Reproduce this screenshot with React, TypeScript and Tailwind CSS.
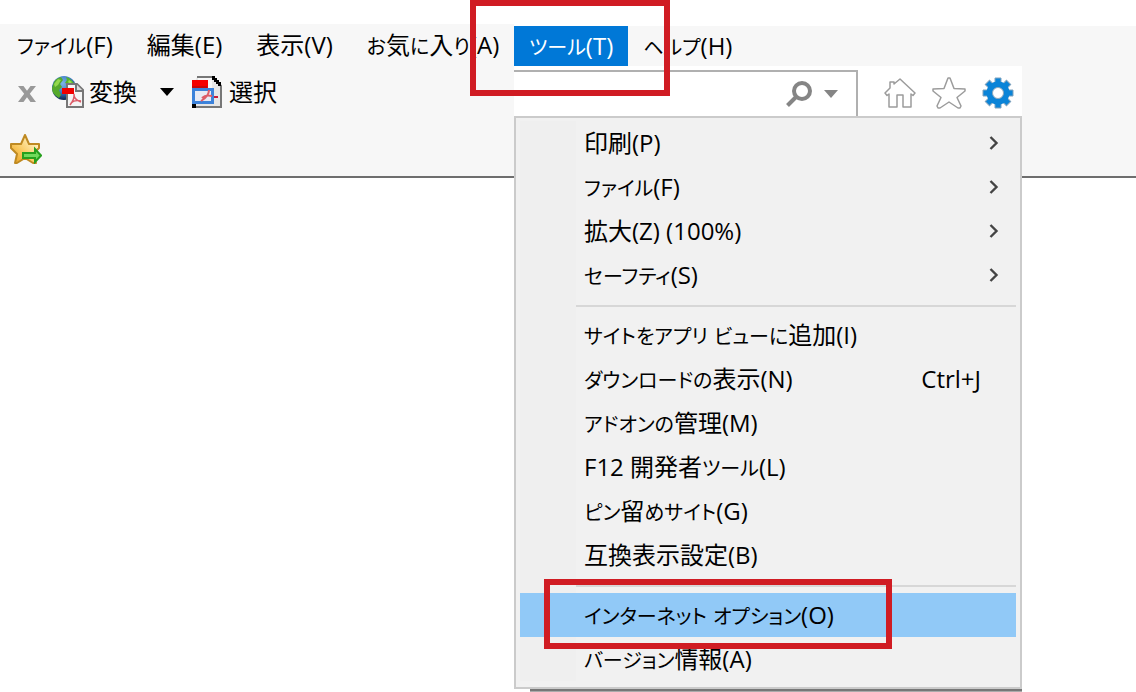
import React from "react";

type MenuEntry = {
  label: string;
  shortcut?: string;
  submenu?: boolean;
  active?: boolean;
};

const MENU_GROUPS: MenuEntry[][] = [
  [
    { label: "印刷(P)", submenu: true },
    { label: "ファイル(F)", submenu: true },
    { label: "拡大(Z) (100%)", submenu: true },
    { label: "セーフティ(S)", submenu: true },
  ],
  [
    { label: "サイトをアプリ ビューに追加(I)" },
    { label: "ダウンロードの表示(N)", shortcut: "Ctrl+J" },
    { label: "アドオンの管理(M)" },
    { label: "F12 開発者ツール(L)" },
    { label: "ピン留めサイト(G)" },
    { label: "互換表示設定(B)" },
  ],
  [
    { label: "インターネット オプション(O)", active: true },
    { label: "バージョン情報(A)" },
  ],
];

const LEFT_MENUS = ["ファイル(F)", "編集(E)", "表示(V)", "お気に入り(A)"];

/* UI labels set kana a step smaller than kanji and latin */
function Label({ text }: { text: string }) {
  return (
    <>
      {text.split(/([\u3040-\u30ff]+)/).map((part, i) =>
        i % 2 === 1 ? (
          <span key={i} className="text-xl leading-none">
            {part}
          </span>
        ) : (
          part
        )
      )}
    </>
  );
}

function CloseIcon() {
  return (
    <svg width="18" height="16" viewBox="0 0 18 16" aria-hidden>
      <path
        d="M0 0h5.500L9 4.800 12.500 0H18l-6.200 7.800L18 16h-5.500L9 11.200 5.500 16H0l6.200-8.200z"
        fill="#999"
      />
    </svg>
  );
}

function GlobePdfIcon() {
  return (
    <svg width="32" height="32" viewBox="0 0 32 32" aria-hidden>
      <defs>
        <radialGradient id="globe" cx="45%" cy="30%" r="70%">
          <stop offset="0" stopColor="#7db6ea" />
          <stop offset="0.55" stopColor="#3b78c4" />
          <stop offset="1" stopColor="#0d2550" />
        </radialGradient>
      </defs>
      <circle cx="12" cy="12" r="12" fill="url(#globe)" />
      <path
        d="M2 6C4 3 6 2 9 1L11 4 8 8 10 11 7 14 9 19 7 22C2 19 0 16 0 12z"
        fill="#55a92c"
      />
      <path d="M2 8l4-5 3 1-3 5-3 2z" fill="#93d84c" />
      <path d="M14 1c4 1 7 4 9 8l-4 2-3-3-3-1 2-3z" fill="#55b52c" />
      <path d="M17 4l3 2-2 2-2-2z" fill="#9be04e" />
      <path d="M15 8h10l6 6v17H15z" fill="#f5f5f5" stroke="#777" strokeWidth="2" />
      <path d="M24 8v7h7" fill="#ddd" stroke="#777" strokeWidth="2" />
      <path d="M10 12h12v6H10z" fill="#f00000" />
      <path
        d="M22 18c1 4-1 7-4 11M22 20c1 3 4 5 7 6M19 27c3-3 6-3 10-2"
        fill="none"
        stroke="#dc5c68"
        strokeWidth="1.6"
      />
    </svg>
  );
}

function SelectPdfIcon() {
  return (
    <svg width="30" height="32" viewBox="0 0 30 32" aria-hidden>
      <path d="M5 1h16l8 9v21H1V10" fill="#e6e6e6" stroke="#777" strokeWidth="2" />
      <path d="M6 2h14v10H6z" fill="#f7f7f7" />
      <path d="M20 0h3v2h2v2h2v2h2v4h-3V8h-2V6h-2V4h-2z" fill="#000" />
      <path d="M0 4h16v8H0z" fill="#f50000" />
      <path d="M0 10h15v2H0z" fill="#c80808" />
      <rect x="1.500" y="13.500" width="19" height="13" fill="#e8eaf4" stroke="#3c82da" strokeWidth="3" />
      <path
        d="M17 14c0 5-3 8-8 11M10 22c3-3 6-3 10-2"
        fill="none"
        stroke="#dc5c68"
        strokeWidth="2"
      />
      <path d="M22 20h4v2h-4z" fill="#c81c38" />
      <path d="M0 28h4v4H0z" fill="#000" />
    </svg>
  );
}

function AddFavoriteIcon() {
  return (
    <svg width="32" height="30" viewBox="0 0 32 30" aria-hidden>
      <defs>
        <linearGradient id="gold" x1="1" y1="0" x2="0" y2="1">
          <stop offset="0.2" stopColor="#fff0bd" />
          <stop offset="0.6" stopColor="#fac95e" />
          <stop offset="1" stopColor="#e59a1b" />
        </linearGradient>
      </defs>
      <path
        d="M15 1l4 9h10v4l-6 6 3 9h-3l-8-5-8 5H5l2-9-6-6v-4h10z"
        fill="url(#gold)"
        stroke="#bf8a22"
        strokeWidth="2"
        strokeLinejoin="round"
      />
      <path
        d="M13 19h12v-4l6 6.500-6 6.500v-4H13z"
        fill="#72da5c"
        stroke="#27a01e"
        strokeWidth="2"
      />
    </svg>
  );
}

function SearchIcon() {
  return (
    <svg width="26" height="26" viewBox="0 0 26 26" fill="none" aria-hidden>
      <circle cx="16" cy="10" r="8" stroke="#858585" strokeWidth="4" />
      <path d="M10 16l-8.500 8.500" stroke="#858585" strokeWidth="4" />
    </svg>
  );
}

function HomeIcon() {
  return (
    <svg width="32" height="30" viewBox="0 0 32 30" fill="none" aria-hidden>
      <path
        d="M16 1l15 14-2 2.500-2-1.500v13h-8V17h-6v12H5V16l-2 1.500L1 15l5-5V4h4v2z"
        stroke="#9c9c9c"
        strokeWidth="1.5"
        strokeLinejoin="round"
      />
    </svg>
  );
}

function StarIcon() {
  return (
    <svg width="34" height="32" viewBox="0 0 34 32" fill="none" aria-hidden>
      <path
        d="M16 1h2l4 10.500 11 .5v2l-8 6.500 4 8.500-1 2h-2l-9-6-9 6H6l-1-2 4-8.500L1 14v-2l11-.5z"
        stroke="#9c9c9c"
        strokeWidth="1.5"
        strokeLinejoin="round"
      />
    </svg>
  );
}

function GearIcon() {
  return (
    <svg width="32" height="32" viewBox="-16 -16 32 32" aria-hidden>
      <g fill="#0a84d8" stroke="#7fa3bf" strokeWidth="1">
        <path d="M-3-15h6v30h-6z" />
        <path d="M-3-15h6v30h-6z" transform="rotate(45)" />
        <path d="M-3-15h6v30h-6z" transform="rotate(90)" />
        <path d="M-3-15h6v30h-6z" transform="rotate(135)" />
      </g>
      <circle r="11.500" fill="#0a84d8" />
      <circle r="5.500" fill="#fff" stroke="#8fa9bd" strokeWidth="1" />
    </svg>
  );
}

function Caret({ className }: { className: string }) {
  return (
    <svg width="14" height="8" viewBox="0 0 14 8" className={className} aria-hidden>
      <path d="M0 0h14L7 8z" fill="currentColor" />
    </svg>
  );
}

function Chevron() {
  return (
    <svg width="10" height="14" viewBox="0 0 10 14" fill="none" aria-hidden>
      <path d="M1.500 1l6 6-6 6" stroke="#444" strokeWidth="2.4" />
    </svg>
  );
}

function MenuItem({ entry }: { entry: MenuEntry }) {
  return (
    <li className="relative">
      <button
        type="button"
        className={`flex h-11 w-full items-center pr-[17px] pl-16 text-left whitespace-nowrap ${
          entry.active ? "bg-[#91c9f7]" : ""
        }`}
      >
        <span className="flex-1">
          <Label text={entry.label} />
        </span>
        {entry.shortcut && <span className="mr-[18px]">{entry.shortcut}</span>}
        {entry.submenu && <Chevron />}
      </button>
      {entry.active && (
        <span
          aria-hidden
          className="pointer-events-none absolute -top-3.5 left-6 z-10 h-[70px] w-[348px] border-6 border-[#d01c23]"
        />
      )}
    </li>
  );
}

function ToolsMenu() {
  return (
    <div className="absolute top-full left-0 w-full">
      <div className="border-2 border-[#cbcbcb] bg-[#f1f1f1] px-1 pt-[3px] pb-1.5">
        <div className="bg-[linear-gradient(90deg,#efefef_56px,#f1f1f1_56px)]">
          {MENU_GROUPS.map((group, i) => (
            <React.Fragment key={i}>
              {i > 0 && <hr className="mt-2 mb-1.5 ml-14 border-t-2 border-[#d7d7d7]" />}
              <ul>
                {group.map((entry) => (
                  <MenuItem key={entry.label} entry={entry} />
                ))}
              </ul>
            </React.Fragment>
          ))}
        </div>
      </div>
      <div className="ml-4 h-1 border-t-2 border-[#777] bg-[#aaa]" />
    </div>
  );
}

export default function App(): React.ReactElement {
  return (
    <div className="min-h-screen overflow-hidden bg-white pt-6 font-['Open_Sans','Noto_Sans_CJK_JP',sans-serif] text-2xl leading-8 text-black [font-feature-settings:'palt']">
      <header className="border-b-2 border-[#6e6e6e] bg-[#f7f7f7]">
        <nav className="flex h-[42px]">
          <div className="flex w-[514px] shrink-0 items-center whitespace-nowrap">
            {LEFT_MENUS.map((label) => (
              <button key={label} type="button" className="px-[17px]">
                <Label text={label} />
              </button>
            ))}
          </div>
          <div className="flex flex-1 border-t-2 border-white">
            <div className="relative">
              <button type="button" className="h-10 bg-[#0078d7] px-[15px] text-white">
                <Label text="ツール(T)" />
              </button>
              <span
                aria-hidden
                className="pointer-events-none absolute -top-[26px] -left-11 z-10 h-24 w-[200px] border-6 border-[#d01c23]"
              />
            </div>
            <button type="button" className="px-[15px]">
              <Label text="ヘルプ(H)" />
            </button>
          </div>
        </nav>

        <div className="flex">
          <div className="w-[514px] shrink-0">
            <div className="flex h-[52px] items-center pl-[18px]">
              <button type="button" aria-label="閉じる" className="mr-4 pt-1">
                <CloseIcon />
              </button>
              <button type="button" className="flex items-center gap-[5px]">
                <GlobePdfIcon />
                変換
              </button>
              <button type="button" aria-label="変換メニュー" className="mr-[18px] ml-[23px]">
                <Caret className="text-black" />
              </button>
              <button type="button" className="flex items-center gap-[7px]">
                <SelectPdfIcon />
                選択
              </button>
            </div>
            <div className="flex h-[58px] items-center pl-2.5">
              <button type="button" aria-label="お気に入りに追加" className="pt-1">
                <AddFavoriteIcon />
              </button>
            </div>
          </div>

          <div className="relative h-[50px] w-[508px] shrink-0">
            <div className="flex h-full bg-white pt-1">
              <div className="flex w-[344px] items-center border-t-2 border-r-2 border-[#b0b0b0] pr-[18px]">
                <input
                  type="text"
                  aria-label="アドレス"
                  className="h-full min-w-0 flex-1 outline-none"
                />
                <button type="button" aria-label="検索" className="mr-3">
                  <SearchIcon />
                </button>
                <button type="button" aria-label="検索オプション">
                  <Caret className="text-[#858585]" />
                </button>
              </div>
              <div className="flex flex-1 items-center justify-end gap-4 pr-2">
                <button type="button" aria-label="ホーム">
                  <HomeIcon />
                </button>
                <button type="button" aria-label="お気に入り">
                  <StarIcon />
                </button>
                <button type="button" aria-label="ツール">
                  <GearIcon />
                </button>
              </div>
            </div>
            <ToolsMenu />
          </div>
        </div>
      </header>
    </div>
  );
}
